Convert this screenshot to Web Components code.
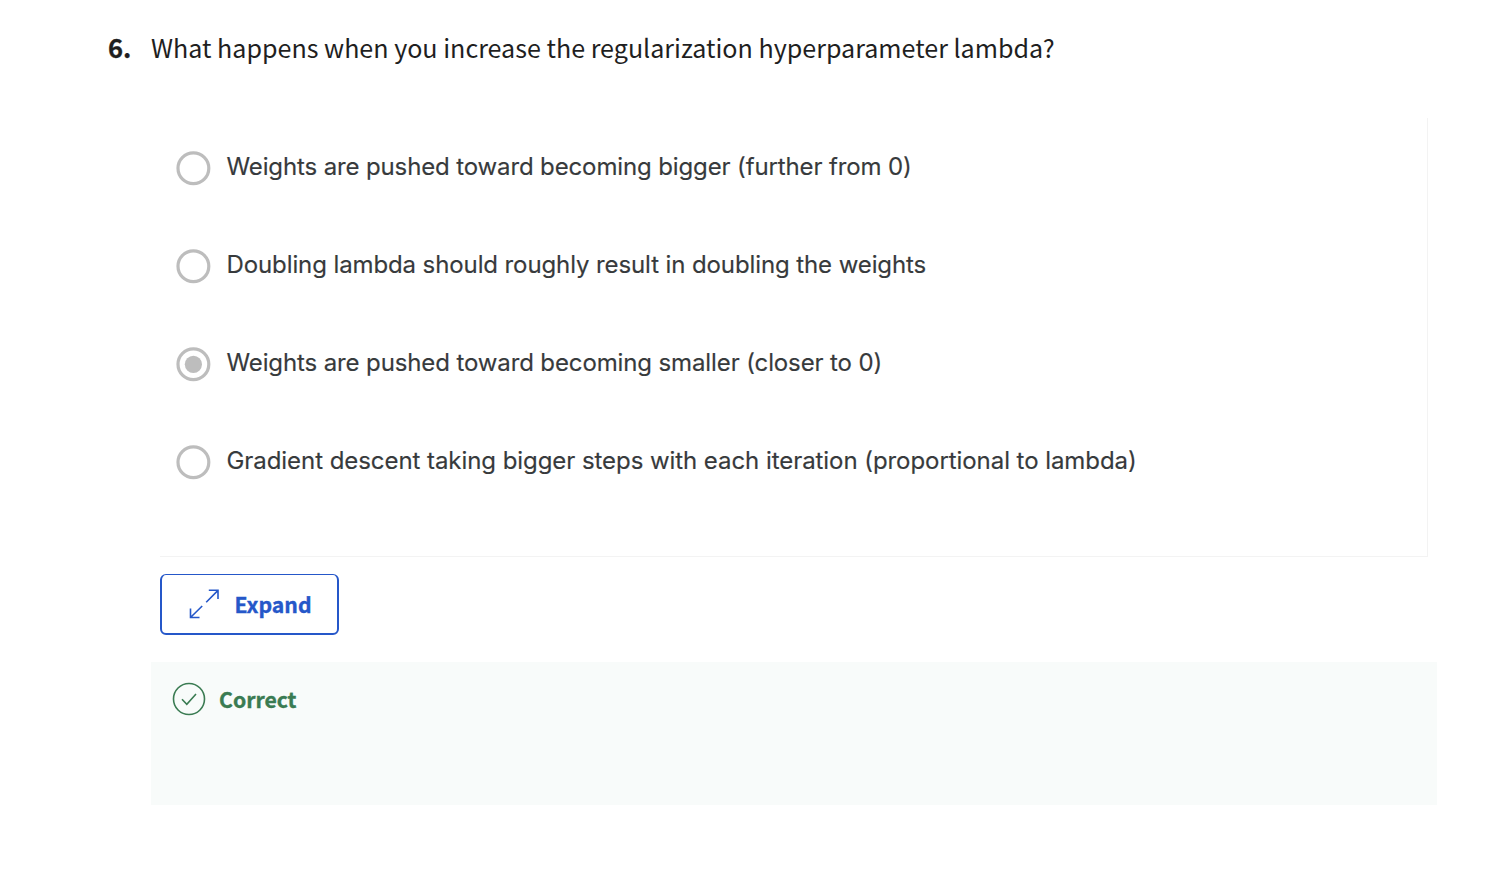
<!DOCTYPE html>
<html lang="en">
<head>
<meta charset="utf-8">
<title>Quiz question</title>
<style>
body { margin: 0; background: #fff; }
</style>
</head>
<body>
<quiz-question number="6.">
  <span slot="prompt">What happens when you increase the regularization hyperparameter lambda?</span>
  <quiz-option style="--tracking: -.13px">Weights are pushed toward becoming bigger (further from 0)</quiz-option>
  <quiz-option style="--tracking: -.105px">Doubling lambda should roughly result in doubling the weights</quiz-option>
  <quiz-option checked style="--tracking: -.12px">Weights are pushed toward becoming smaller (closer to 0)</quiz-option>
  <quiz-option style="--tracking: -.062px">Gradient descent taking bigger steps with each iteration (proportional to lambda)</quiz-option>
  <expand-button slot="action">Expand</expand-button>
  <quiz-feedback slot="feedback">Correct</quiz-feedback>
</quiz-question>

<script>
const define = (name, html, setup) => {
  const template = document.createElement('template');
  template.innerHTML = html;
  customElements.define(name, class extends HTMLElement {
    constructor() {
      super();
      this.attachShadow({ mode: 'open' }).append(template.content.cloneNode(true));
    }
    connectedCallback() { if (setup) setup(this); }
  });
};

define('quiz-question', `
<style>
  :host { display: block; height: 876px; box-sizing: border-box; padding: 27px 53px 0 108px; font-family: "Noto Sans CJK SC", sans-serif; color: #1f1f1f; }
  header { display: grid; grid-template-columns: 43px 1fr; height: 40px; line-height: 40px; font-size: 25.08px; white-space: nowrap; }
  .num { font-weight: 700; font-size: 25.5px; -webkit-text-stroke: .3px currentColor; }
  .body { margin-left: 43px; }
  .options { box-sizing: border-box; margin: 51px 9px 0; height: 439px; padding: 1px 16px 0; border: solid #f3f3f3; border-width: 0 1px 1px 0; }
  .action { display: flex; margin: 17px 0 27px 9px; }
</style>
<header><span class="num"></span><slot name="prompt"></slot></header>
<div class="body">
  <div class="options"><slot></slot></div>
  <div class="action"><slot name="action"></slot></div>
  <slot name="feedback"></slot>
</div>`, el => { el.shadowRoot.querySelector('.num').textContent = el.getAttribute('number'); });

define('quiz-option', `
<style>
  :host { display: flex; align-items: center; gap: 15.5px; height: 98px; font: 400 24px/34px Inter, sans-serif; letter-spacing: var(--tracking, 0); color: #373a3c; white-space: nowrap; -webkit-text-stroke: .15px currentColor; }
  svg { display: block; }
  .dot { display: none; }
  :host([checked]) .dot { display: block; }
  .label { padding-bottom: 2px; }
</style>
<svg width="35" height="36" viewBox="0 0 35 36"><circle cx="17.4" cy="18.3" r="15.4" fill="none" stroke="#bdbdbd" stroke-width="3.2"/><circle class="dot" cx="17.4" cy="18.3" r="8.6" fill="#bdbdbd"/></svg>
<span class="label"><slot></slot></span>`);

define('expand-button', `
<style>
  :host { box-sizing: border-box; display: flex; align-items: center; width: 179px; height: 61px; padding-left: 27px; gap: 14.5px; border: 2px solid #2557c9; border-top-width: 1px; border-radius: 6px; color: #2557c9; font-weight: 700; font-size: 21.2px; line-height: 30px; -webkit-text-stroke: .35px currentColor; }
  svg { display: block; }
</style>
<svg width="31" height="32" viewBox="0 0 31 32" fill="none" stroke="currentColor" stroke-width="1.6"><path d="M17.2 14.2 29 2.4M19.8 2.2h9.2V11M13.2 18 1.5 29.5M1.5 20.5v9h9"/></svg>
<span><slot></slot></span>`);

define('quiz-feedback', `
<style>
  :host { box-sizing: border-box; display: flex; align-items: flex-start; gap: 13px; height: 143px; padding: 20px 21px; background: #f8fbfa; color: #3a7b52; font-weight: 700; font-size: 21.2px; line-height: 34px; -webkit-text-stroke: .35px currentColor; }
  svg { display: block; }
</style>
<svg width="34" height="34" viewBox="0 0 34 34" fill="none" stroke="currentColor" stroke-width="1.6"><circle cx="17" cy="17" r="15.5"/><path d="m10 17.3 4.8 5L24 12"/></svg>
<span><slot></slot></span>`);
</script>
</body>
</html>
